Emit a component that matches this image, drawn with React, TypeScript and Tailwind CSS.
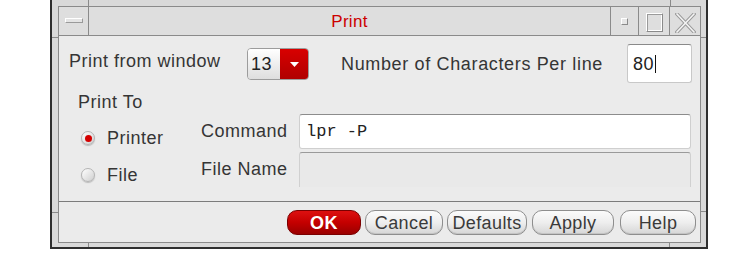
import React from 'react';

const font = { fontFamily: '"Liberation Sans", Arial, sans-serif' };

function GrayButton({ label, w, className = '' }: { label: string; w: string; className?: string }) {
  return (
    <button
      className={`${w} ${className} h-[25px] rounded-[10px] border border-[#8e8e8e] bg-gradient-to-b from-[#fbfbfb] via-[#eeeeee] to-[#d6d6d6] text-[18px] leading-[20px] tracking-[0.4px] text-[#3a3a3a] flex items-center justify-center shadow-[inset_0_-1px_0_#c4c4c4]`}
    >
      {label}
    </button>
  );
}

function Radio({ checked }: { checked?: boolean }) {
  return (
    <span className="w-[14px] h-[14px] rounded-full border border-[#b4b4b4] bg-gradient-to-br from-[#ffffff] to-[#cfcfcf] flex items-center justify-center shadow-[0_1px_1px_#bbbbbb]">
      {checked && <span className="w-[7px] h-[7px] rounded-full bg-[#d40000]" />}
    </span>
  );
}

export default function App() {
  return (
    <div className="w-[747px] h-[259px] bg-white overflow-hidden" style={font}>
      <div className="relative ml-[50px] w-[658px] h-[249px] border-x-2 border-b-2 border-[#2e2e2e] bg-[#d9d9d9] pt-[6px] pl-[6px] pr-[5px] pb-[4px] flex">
        {/* frame resize ticks */}
        <div className="absolute left-[36px] top-0 w-px h-[6px] bg-[#8a8a8a]" />
        <div className="absolute left-[618px] top-0 w-px h-[6px] bg-[#8a8a8a]" />
        <div className="absolute left-[36px] bottom-0 w-px h-[4px] bg-[#8a8a8a]" />
        <div className="absolute left-[617px] bottom-0 w-px h-[4px] bg-[#8a8a8a]" />
        <div className="absolute left-0 top-[37px] w-[6px] h-px bg-[#8a8a8a]" />
        <div className="absolute left-0 top-[212px] w-[6px] h-px bg-[#8a8a8a]" />
        <div className="absolute right-0 top-[37px] w-[5px] h-px bg-[#8a8a8a]" />
        <div className="absolute right-0 top-[211px] w-[5px] h-px bg-[#8a8a8a]" />

        <div className="flex-1 flex flex-col border border-[#8a8a8a]">
          {/* title bar */}
          <div className="h-[28px] flex bg-[#dedede] box-content border-b border-[#8a8a8a]">
            <div className="w-[29px] box-content border-r border-[#8a8a8a] flex items-start justify-center pt-[11px]">
              <span className="w-[18px] h-[5px] border border-[#9a9a9a] border-t-white border-l-white bg-[#e4e4e4]" />
            </div>
            <div className="flex-1 flex items-center justify-center text-[17px] tracking-[0.3px] text-[#cc0000] pt-[1px]">Print</div>
            <div className="w-[27px] box-content border-l border-[#8a8a8a] flex items-start justify-center pt-[11px]">
              <span className="w-[7px] h-[7px] border border-[#8a8a8a] border-t-white border-l-white bg-[#e6e6e6]" />
            </div>
            <div className="w-[30px] box-content border-l border-[#8a8a8a] flex items-start justify-center pt-[6px]">
              <span className="w-[17px] h-[19px] border border-[#8a8a8a] border-t-white border-l-white shadow-[inset_1px_1px_0_#9a9a9a,inset_-1px_-1px_0_#ffffff]" />
            </div>
            <div className="w-[30px] box-content border-l border-[#8a8a8a] flex items-start justify-center pt-[6px]">
              <svg width="21" height="20" viewBox="0 0 21 20">
                <path d="M2 1 L19 19 M19 1 L2 19" stroke="#9a9a9a" strokeWidth="3.5" strokeLinecap="square" />
                <path d="M2 1 L19 19 M19 1 L2 19" stroke="#f4f4f4" strokeWidth="1.5" strokeLinecap="square" />
              </svg>
            </div>
          </div>

          {/* content */}
          <div className="flex-1 flex flex-col bg-[#ebebeb] text-[18px] leading-[20px] tracking-[0.5px] text-[#353535]">
            <div className="h-[39px] mt-[8px] flex pl-[10px]">
              <span className="w-[178px] mt-[7px]">Print from window</span>
              <div className="w-[62px] h-[32px] mt-[4px] flex rounded-[4px] overflow-hidden border border-[#9c9c9c]">
                <span className="flex-1 bg-gradient-to-b from-white to-[#dedede] text-[#222] pl-[3px] flex items-center">13</span>
                <span className="w-[28px] bg-gradient-to-b from-[#d80000] to-[#b00000] flex items-center justify-center">
                  <svg width="9" height="5" viewBox="0 0 9 5"><path d="M0 0 H9 L4.5 5 Z" fill="#fff" /></svg>
                </span>
              </div>
              <span className="ml-[32px] mt-[10px] tracking-[0.65px]">Number of Characters Per line</span>
              <div className="ml-auto mr-[8px] w-[65px] h-[39px] bg-white rounded-[3px] border border-[#c8c8c8] border-t-[#8a8a8a] flex items-center pl-[5px] text-[#222]">
                80<span className="w-px h-[18px] bg-[#111] ml-[1px]" />
              </div>
            </div>

            <div className="flex mt-[9px] pl-[10px]">
              <div className="w-[132px] flex flex-col">
                <span className="pl-[9px]">Print To</span>
                <div className="mt-[16px] h-[20px] flex items-center pl-[12px] gap-[12px]">
                  <Radio checked />
                  <span>Printer</span>
                </div>
                <div className="mt-[17px] h-[20px] flex items-center pl-[12px] gap-[12px]">
                  <Radio />
                  <span>File</span>
                </div>
              </div>
              <div className="flex-1 flex flex-col mt-[22px] pr-[9px]">
                <div className="h-[35px] flex items-center">
                  <span className="w-[98px] pb-[2px]">Command</span>
                  <div className="flex-1 h-full bg-white rounded-[3px] border border-[#cfcfcf] border-t-[#8c8c8c] flex items-center pl-[6px] text-[17px] tracking-normal text-[#222]" style={{ fontFamily: '"Liberation Mono", "Courier New", monospace' }}>
                    lpr -P
                  </div>
                </div>
                <div className="h-[35px] mt-[3px] flex items-center">
                  <span className="w-[98px] pb-[2px]">File Name</span>
                  <div className="flex-1 h-full rounded-t-[3px] border border-b-0 border-[#d0d0d0] border-t-[#9a9a9a] bg-[#e9e9e9]" />
                </div>
              </div>
            </div>

            <div className="mt-auto border-t border-[#7c7c7c] pt-[8px] pb-[7px] pr-[4px] flex justify-end">
              <button className="w-[74px] h-[25px] rounded-[10px] border border-[#7a0000] bg-gradient-to-b from-[#dd1010] via-[#c40000] to-[#9a0000] text-white font-bold text-[18px] leading-[20px] tracking-[0.5px] flex items-center justify-center">
                OK
              </button>
              <GrayButton label="Cancel" w="w-[78px]" className="ml-[4px]" />
              <GrayButton label="Defaults" w="w-[80px]" className="ml-[4px]" />
              <GrayButton label="Apply" w="w-[82px]" className="ml-[5px]" />
              <GrayButton label="Help" w="w-[76px]" className="ml-[6px]" />
            </div>
          </div>
        </div>
      </div>
    </div>
  );
}
